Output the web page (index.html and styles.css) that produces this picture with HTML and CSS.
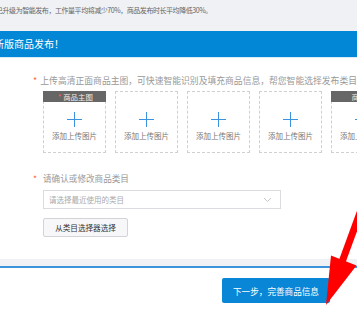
FILE: index.html
```html
<!DOCTYPE html>
<html lang="zh-CN">
<head>
    <meta charset="UTF-8">
    <meta name="viewport" content="width=device-width, initial-scale=1.0">
    <title>商品发布</title>
    <link rel="stylesheet" href="styles.css">
</head>
<body>
    <div class="notice">已升级为智能发布，工作量平均将减少70%，商品发布时长平均降低30%。</div>
    <div class="banner">新版商品发布！</div>

    <main class="form">
        <div class="label"><span class="star">*</span>上传高清正面商品主图，可快速智能识别及填充商品信息，帮您智能选择发布类目</div>
        <div class="uploads">
            <div class="upload">
                <div class="upload-head"><span class="star">*</span>商品主图</div>
                <div class="plus"></div>
                <div class="upload-text">添加上传图片</div>
            </div>
            <div class="upload">
                <div class="upload-head blank"></div>
                <div class="plus"></div>
                <div class="upload-text">添加上传图片</div>
            </div>
            <div class="upload">
                <div class="upload-head blank"></div>
                <div class="plus"></div>
                <div class="upload-text">添加上传图片</div>
            </div>
            <div class="upload">
                <div class="upload-head blank"></div>
                <div class="plus"></div>
                <div class="upload-text">添加上传图片</div>
            </div>
            <div class="upload">
                <div class="upload-head">商品图</div>
                <div class="plus"></div>
                <div class="upload-text">添加上传图片</div>
            </div>
        </div>

        <div class="label second"><span class="star">*</span>请确认或修改商品类目</div>
        <div class="select">
            <span>请选择最近使用的类目</span>
            <svg width="9" height="6" viewBox="0 0 9 6"><path d="M1 1 L4.5 4.5 L8 1" fill="none" stroke="#c8c8cc" stroke-width="1"/></svg>
        </div>
        <button class="picker">从类目选择器选择</button>
    </main>

    <div class="divider"></div>

    <footer class="footer">
        <button class="next">下一步，完善商品信息</button>
    </footer>

    <svg class="arrow" width="357" height="311" viewBox="0 0 357 311">
        <line x1="372" y1="180" x2="342" y2="262" stroke="#f00" stroke-width="7"/>
        <polygon points="326,305 331,255.5 356.5,265.5" fill="#f00"/>
    </svg>
</body>
</html>
```

FILE: styles.css
```css
body {
    margin: 0;
    width: 357px;
    height: 311px;
    overflow: hidden;
    position: relative;
    background-color: #fff;
    font-family: "Noto Sans CJK SC", "Noto Sans", sans-serif;
}

.notice {
    height: 31px;
    background-color: #f0f1f4;
    color: #666;
    font-size: 7px;
    letter-spacing: -0.45px;
    line-height: 20px;
    white-space: nowrap;
    text-indent: -4px;
    overflow: hidden;
}

.banner {
    height: 26px;
    background-color: #0286d6;
    color: #fff;
    font-size: 10px;
    line-height: 26px;
    text-indent: -6px;
    white-space: nowrap;
    border-bottom: 1px solid #d6ebf8;
}

.form {
    padding: 17px 0 22px 33px;
}

.label {
    display: flex;
    font-size: 8.8px;
    line-height: 12px;
    color: #999;
    white-space: nowrap;
}

.label.second {
    margin-top: 19px;
    font-size: 8.6px;
}

.star {
    width: 10px;
    color: #ff6a3c;
}

.uploads {
    display: flex;
    gap: 9px;
    margin: 4px 0 0 10px;
}

.upload {
    flex: none;
    width: 63px;
    height: 62px;
    box-sizing: border-box;
    border: 1px dashed #cfcfd4;
    display: flex;
    flex-direction: column;
    align-items: center;
}

.upload-head {
    align-self: stretch;
    margin: -1px -1px 0;
    height: 11px;
    background-color: #666;
    color: #eee;
    font-size: 7.4px;
    line-height: 11px;
    text-align: center;
    display: flex;
    justify-content: center;
}

.upload-head .star {
    width: 7px;
}

.upload-head.blank {
    background: none;
}

.plus {
    position: relative;
    width: 15px;
    height: 15px;
    margin-top: 10px;
}

.plus::before,
.plus::after {
    content: "";
    position: absolute;
    background-color: #3b92e0;
}

.plus::before {
    left: 0;
    right: 0;
    top: 7px;
    height: 1.3px;
}

.plus::after {
    top: 0;
    bottom: 0;
    left: 7px;
    width: 1.3px;
}

.upload-text {
    margin-top: 4px;
    font-size: 7.5px;
    line-height: 10px;
    color: #777;
    white-space: nowrap;
}

.select {
    margin: 6px 0 0 10px;
    width: 238px;
    height: 19px;
    box-sizing: border-box;
    border: 1px solid #dcdce0;
    display: flex;
    align-items: center;
    justify-content: space-between;
    padding: 0 8px 0 5px;
    font-size: 7.5px;
    color: #aaa;
}

.picker {
    display: block;
    margin: 9px 0 0 10px;
    width: 85px;
    height: 19px;
    padding: 0;
    background-color: #f7f7f9;
    border: 1px solid #d3d3d8;
    border-radius: 2px;
    font-family: inherit;
    font-size: 7.6px;
    color: #333;
}

.divider {
    height: 7px;
    background-color: #f0f1f4;
    border-bottom: 2px solid #3b94db;
}

.footer {
    display: flex;
    justify-content: flex-end;
    padding: 10px 27px 0 0;
}

.next {
    width: 108px;
    height: 25px;
    padding: 0;
    border: none;
    border-radius: 2px;
    background-color: #0a86d6;
    color: #fff;
    font-family: inherit;
    font-size: 8.6px;
}

.arrow {
    position: absolute;
    top: 0;
    left: 0;
    pointer-events: none;
}
```
